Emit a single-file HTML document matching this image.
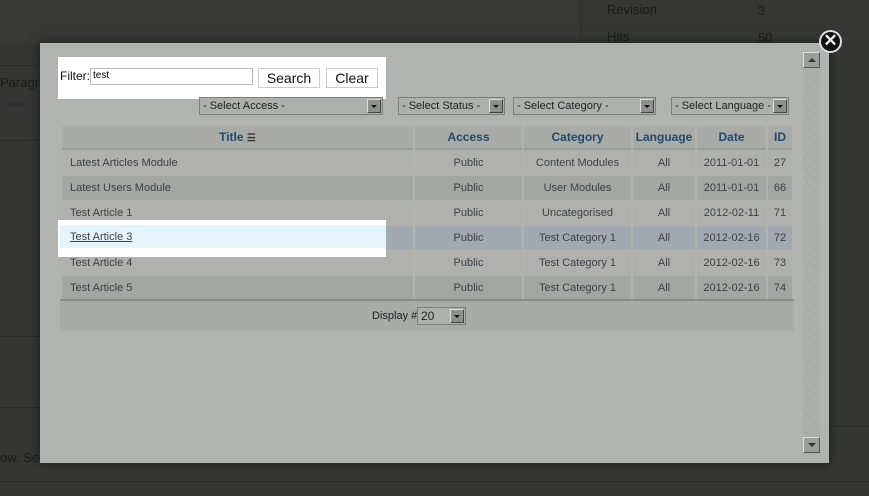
<!DOCTYPE html>
<html><head><meta charset="utf-8"><style>
*{margin:0;padding:0;box-sizing:border-box}
body{width:869px;height:496px;overflow:hidden;background:#353633;font-family:"Liberation Sans",sans-serif;position:relative}
.a{position:absolute}
.bgt{color:#1a1c1a;font-size:13px}
.modal{left:40px;top:43px;width:789px;height:420px;background:#b1b3ae;box-shadow:0 0 10px rgba(0,0,0,.5)}
.sel{position:absolute;height:18px;border:1px solid #7d7f7b;background:#aeb0ab;font-size:11px;color:#222;padding:2px 3px;white-space:nowrap}
.sel i{position:absolute;right:1px;top:1px;width:14px;height:14px;background:#8e908b;border:1px solid #555;border-color:#ddd #444 #444 #ddd}
.sel i:after{content:"";position:absolute;left:3px;top:5px;border-left:3px solid transparent;border-right:3px solid transparent;border-top:3px solid #111}
table{position:absolute;left:60px;top:125px;width:734px;border-collapse:separate;border-spacing:2px 1px;font-size:11px}
td,th{height:24px;text-align:center;color:#3d4044}
th{background:#a9aba7;color:#1e4a6e;font-weight:bold;font-size:12px;border-bottom:2px solid #999b97}
td{background:#b0b1ad}
tr.e td{background:#a4a6a2}
tr.h td{background:#a3a9b1}
td.t{text-align:left;padding-left:8px}
</style></head><body>
<div class="a" style="left:0;top:0;width:580px;height:43px;background:#383936"></div>
<div class="a" style="left:580px;top:0;width:289px;height:43px;background:#363734;border-left:1px solid #2e2f2c"></div>
<div class="a bgt" style="left:607px;top:2px">Revision</div>
<div class="a bgt" style="left:758px;top:3px">3</div>
<div class="a bgt" style="left:607px;top:29px">Hits</div>
<div class="a bgt" style="left:758px;top:30px">50</div>
<div class="a" style="left:0;top:65px;width:40px;height:1px;background:#2a2b29"></div>
<div class="a bgt" style="left:0;top:75px">Paragrap</div>
<div class="a" style="left:9px;top:103px;font-size:6px;color:#1a2a4a;font-weight:bold">HTML</div>
<div class="a" style="left:0;top:140px;width:40px;height:1px;background:#2a2b29"></div>
<div class="a" style="left:0;top:336px;width:40px;height:1px;background:#2a2b29"></div>
<div class="a" style="left:0;top:407px;width:40px;height:1px;background:#2a2b29"></div>
<div class="a bgt" style="left:0;top:450px">ow. See</div>
<div class="a" style="left:0;top:481px;width:869px;height:1px;background:#2a2b29"></div>
<div class="a" style="left:829px;top:426px;width:40px;height:1px;background:#2a2b29"></div>

<div class="a modal"></div>
<div class="a" style="left:803px;top:52px;width:17px;height:402px;background:repeating-linear-gradient(45deg,#a0a29d 0 1px,#b8bab5 1px 2px)"></div>
<div class="a" style="left:803px;top:52px;width:17px;height:16px;background:#9c9e99;border:1px solid;border-color:#ddd #555 #555 #ddd"><div style="position:absolute;left:4px;top:5px;border-left:4px solid transparent;border-right:4px solid transparent;border-bottom:4px solid #333"></div></div>
<div class="a" style="left:803px;top:437px;width:17px;height:16px;background:#9c9e99;border:1px solid;border-color:#ddd #555 #555 #ddd"><div style="position:absolute;left:4px;top:5px;border-left:4px solid transparent;border-right:4px solid transparent;border-top:4px solid #333"></div></div>

<div class="a" style="left:819px;top:30px;width:23px;height:23px;border-radius:50%;background:#111;border:2px solid #ddd;color:#eee;font-weight:bold;font-size:17px;line-height:18px;text-align:center">✕</div>

<div class="a" style="left:58px;top:57px;width:328px;height:42px;background:#fff"></div>
<div class="a" style="left:60px;top:69px;font-size:12px;color:#111">Filter:</div>
<div class="a" style="left:90px;top:68px;width:163px;height:17px;border:1px solid #bbb;font-size:10px;padding:1px 2px">test</div>
<div class="a" style="left:258px;top:68px;width:62px;height:20px;border:1px solid #ccc;font-size:14px;text-align:center;line-height:18px;color:#111">Search</div>
<div class="a" style="left:326px;top:68px;width:52px;height:20px;border:1px solid #ccc;font-size:14px;text-align:center;line-height:18px;color:#111">Clear</div>

<div class="sel" style="left:199px;top:97px;width:184px">- Select Access -<i></i></div>
<div class="sel" style="left:398px;top:97px;width:107px">- Select Status -<i></i></div>
<div class="sel" style="left:513px;top:97px;width:143px">- Select Category -<i></i></div>
<div class="sel" style="left:671px;top:97px;width:118px">- Select Language -<i></i></div>

<table>
<tr><th style="width:351px">Title <span style="font-size:10px;color:#333">&#9776;</span></th><th style="width:107px">Access</th><th style="width:107px">Category</th><th style="width:62px">Language</th><th style="width:69px">Date</th><th>ID</th></tr>
<tr><td class="t">Latest Articles Module</td><td>Public</td><td>Content Modules</td><td>All</td><td>2011-01-01</td><td>27</td></tr>
<tr class="e"><td class="t">Latest Users Module</td><td>Public</td><td>User Modules</td><td>All</td><td>2011-01-01</td><td>66</td></tr>
<tr><td class="t">Test Article 1</td><td>Public</td><td>Uncategorised</td><td>All</td><td>2012-02-11</td><td>71</td></tr>
<tr class="h"><td class="t">Test Article 3</td><td>Public</td><td>Test Category 1</td><td>All</td><td>2012-02-16</td><td>72</td></tr>
<tr><td class="t">Test Article 4</td><td>Public</td><td>Test Category 1</td><td>All</td><td>2012-02-16</td><td>73</td></tr>
<tr class="e"><td class="t">Test Article 5</td><td>Public</td><td>Test Category 1</td><td>All</td><td>2012-02-16</td><td>74</td></tr>
</table>
<div class="a" style="left:58px;top:220px;width:328px;height:37px;background:#fff"></div>
<div class="a" style="left:60px;top:225px;width:326px;height:23px;background:#e3f4fc"></div>
<div class="a" style="left:70px;top:231px;font-size:11px;color:#444;text-decoration:underline">Test Article 3</div>

<div class="a" style="left:60px;top:299px;width:734px;height:2px;background:#8a8c88"></div>
<div class="a" style="left:60px;top:301px;width:734px;height:30px;background:#a9aba7"></div>
<div class="a" style="left:372px;top:310px;font-size:11px;color:#222">Display #</div>
<div class="sel" style="left:417px;top:307px;width:49px;font-size:12px;padding:1px 3px">20<i></i></div>
</body></html>
